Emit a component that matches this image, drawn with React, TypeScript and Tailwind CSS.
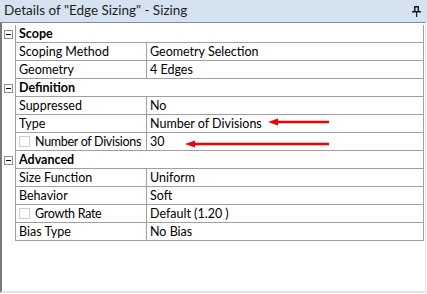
import React from "react";

type Row =
  | { kind: "header"; label: string }
  | { kind: "prop"; label: string; value: string; check?: boolean };

const rows: Row[] = [
  { kind: "header", label: "Scope" },
  { kind: "prop", label: "Scoping Method", value: "Geometry Selection" },
  { kind: "prop", label: "Geometry", value: "4 Edges" },
  { kind: "header", label: "Definition" },
  { kind: "prop", label: "Suppressed", value: "No" },
  { kind: "prop", label: "Type", value: "Number of Divisions" },
  { kind: "prop", label: "Number of Divisions", value: "30", check: true },
  { kind: "header", label: "Advanced" },
  { kind: "prop", label: "Size Function", value: "Uniform" },
  { kind: "prop", label: "Behavior", value: "Soft" },
  { kind: "prop", label: "Growth Rate", value: "Default (1.20 )", check: true },
  { kind: "prop", label: "Bias Type", value: "No Bias" },
];

function MinusBox() {
  return (
    <div className="w-[9px] h-[9px] border border-[#8c8c8c] bg-white flex items-center justify-center">
      <div className="w-[5px] h-px bg-black" />
    </div>
  );
}

function Pin() {
  return (
    <svg width="9" height="11" viewBox="0 0 9 11" className="block">
      <rect x="0" y="5" width="9" height="1.5" fill="#1a1a1a" />
      <rect x="2" y="0" width="1.5" height="6" fill="#1a1a1a" />
      <rect x="5.5" y="0" width="1.5" height="6" fill="#1a1a1a" />
      <rect x="2" y="0" width="5" height="1.5" fill="#1a1a1a" />
      <rect x="4" y="6" width="1.2" height="5" fill="#1a1a1a" />
    </svg>
  );
}

function Arrow({ x1, x2, y }: { x1: number; x2: number; y: number }) {
  return (
    <svg
      className="absolute pointer-events-none"
      style={{ left: x1, top: y - 4, width: x2 - x1, height: 8 }}
      viewBox={`0 0 ${x2 - x1} 8`}
    >
      <line x1={8} y1={4} x2={x2 - x1} y2={4} stroke="#f00000" strokeWidth={2.4} />
      <polygon points="0,4 10,0.5 10,7.5" fill="#f00000" />
    </svg>
  );
}

export default function App() {
  return (
    <div
      className="relative w-[427px] h-[294px] bg-white text-black flex flex-col overflow-hidden"
      style={{ fontFamily: 'Lato, "Liberation Sans", sans-serif' }}
    >
      <div className="h-[22px] bg-[#d5e3f0] flex items-center justify-between pl-[4px] pr-[6px]">
        <span className="text-[13.5px] text-[#1e1e1e] leading-none">Details of "Edge Sizing" - Sizing</span>
        <Pin />
      </div>
      <div className="flex-1 flex flex-col border-t border-t-[#8a8a8a] border-l-2 border-l-[#7a7a7a] border-r border-r-[#e3e3e3] border-b-2 border-b-[#e6e6e6] mr-[1px] mb-[1px]">
        <div className="flex flex-col pt-[2px] pr-[1px] text-[12.5px] leading-[17px]">
          {rows.map((r, i) =>
            r.kind === "header" ? (
              <div key={i} className="flex h-[18px]">
                <div className="w-[13px] flex items-center justify-center">
                  <MinusBox />
                </div>
                <div className="flex-1 border-l border-b border-r border-[#a0a0a0] flex items-center pl-[3px] font-bold">
                  {r.label}
                </div>
              </div>
            ) : (
              <div key={i} className="flex h-[18px]">
                <div className="w-[13px]" />
                <div className="w-[131px] border-l border-b border-[#a0a0a0] flex items-center pl-[3px] overflow-hidden">
                  {r.check && (
                    <div className="w-[11px] h-[11px] border border-[#cfcfcf] bg-white mr-[5px] shrink-0" />
                  )}
                  <span className={r.check ? "whitespace-nowrap tracking-[-0.3px]" : "whitespace-nowrap"}>{r.label}</span>
                </div>
                <div className="flex-1 border-l border-b border-r border-[#a0a0a0] flex items-center pl-[3px] whitespace-nowrap">
                  {r.value}
                </div>
              </div>
            )
          )}
        </div>
      </div>
      <Arrow x1={268} x2={329} y={122} />
      <Arrow x1={185} x2={329} y={144} />
    </div>
  );
}
